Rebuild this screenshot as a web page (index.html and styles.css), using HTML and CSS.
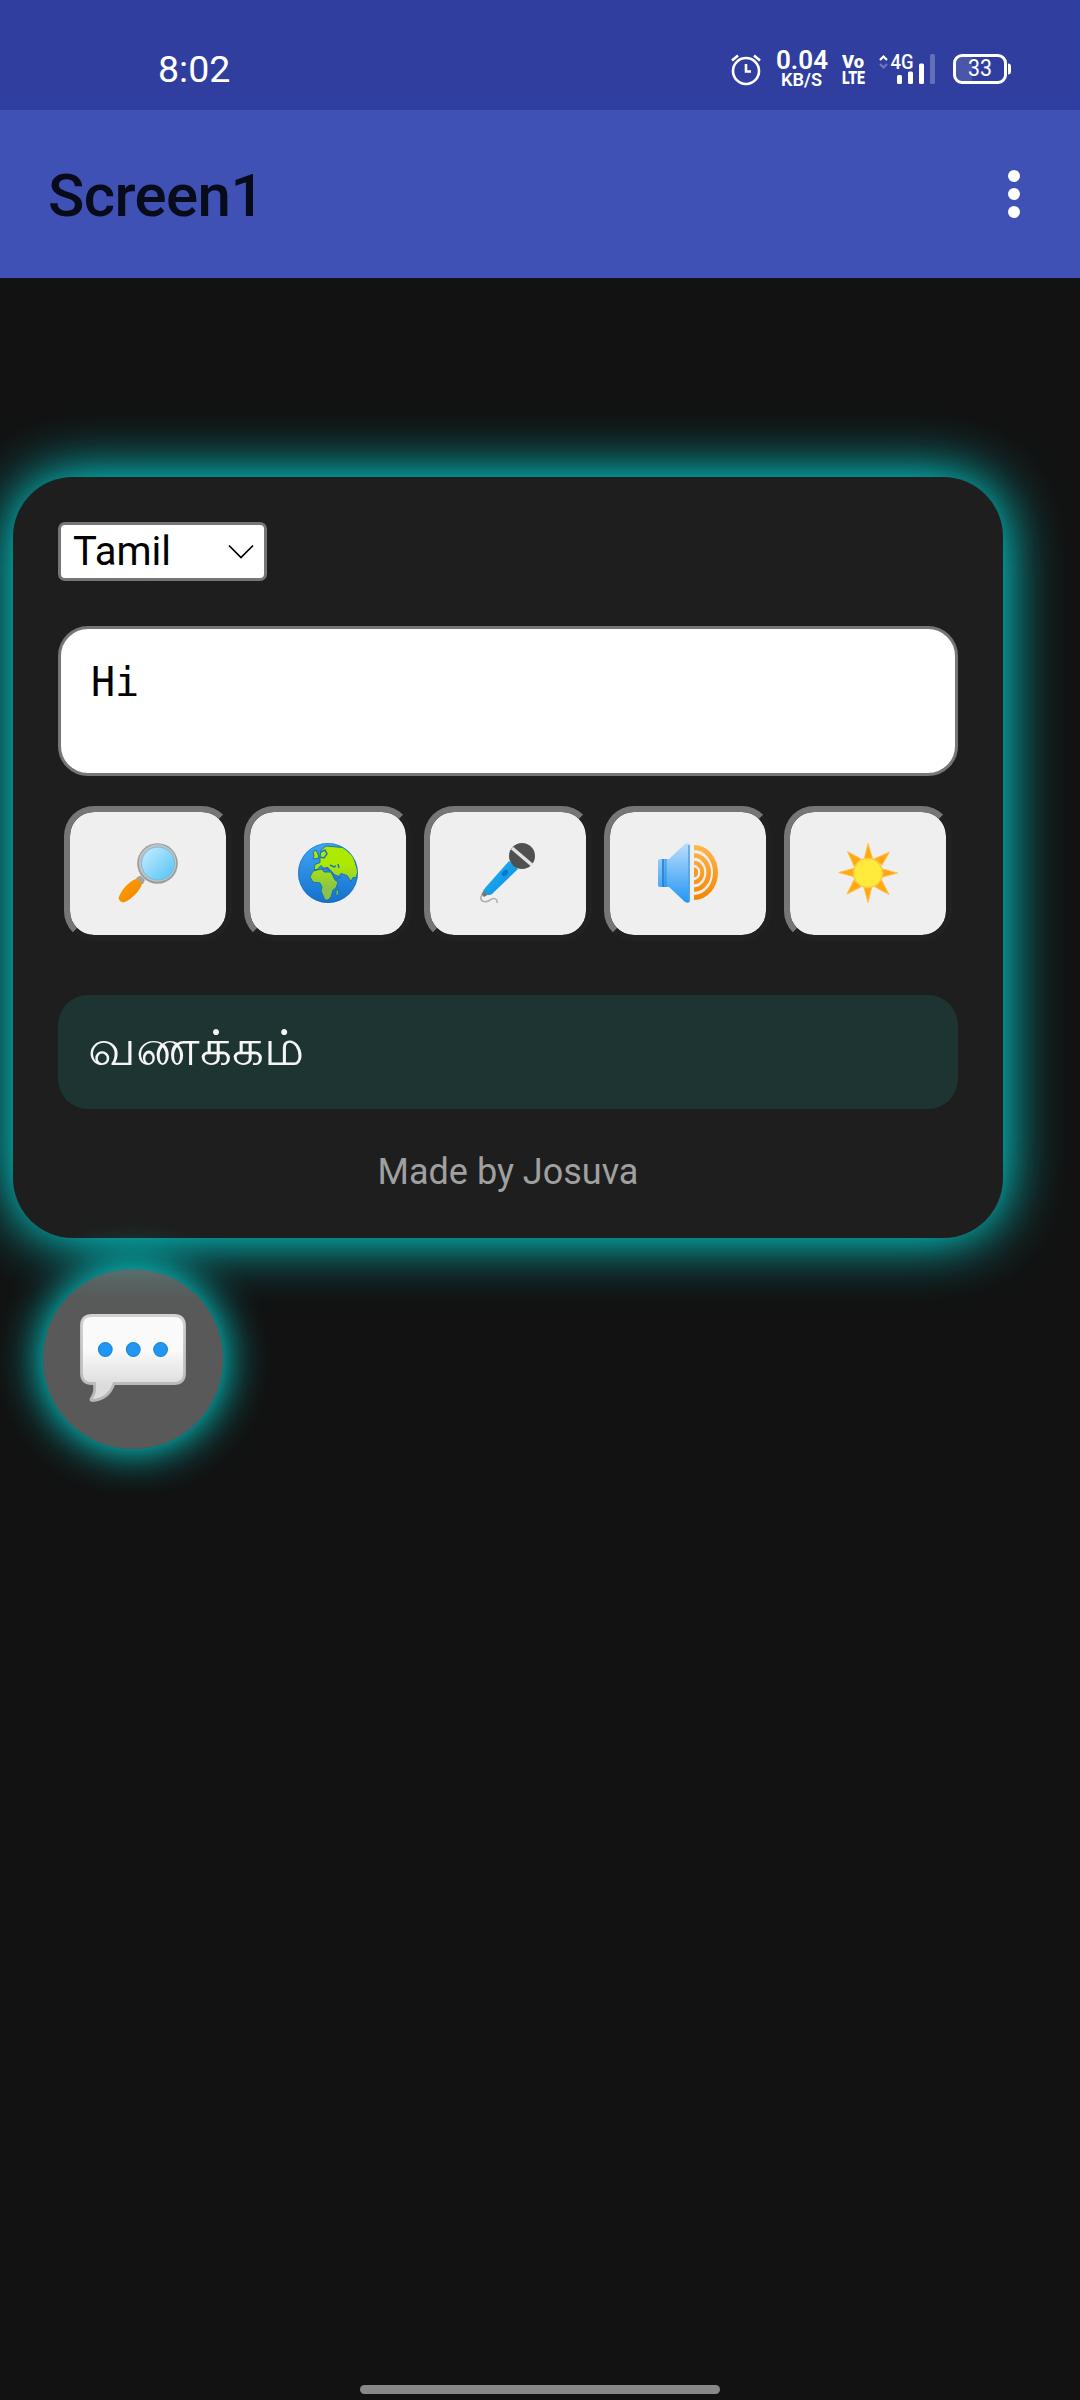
FILE: index.html
```html
<!DOCTYPE html>
<html lang="en">
<head>
<meta charset="utf-8">
<title>Screen1</title>
<link rel="stylesheet" href="styles.css">
</head>
<body>
<header class="status">
  <span class="clock">8:02</span>
  <svg class="status-icons" width="340" height="80" viewBox="0 0 340 80">
    <g fill="none" stroke="#fff" stroke-width="2.6">
      <circle cx="46" cy="41" r="13"/>
      <path d="M46 34v7.500h5M32 30.500l6-5M54 25.500l6 5"/>
      <path d="M180 30l3.500-3.500L187 30" stroke-width="2.200"/>
      <path d="M180 34l3.500 3.500L187 34" stroke-width="2.200" opacity=".3"/>
    </g>
    <g fill="#fff">
      <text x="76" y="38.500" font-size="25" font-weight="600" textLength="52" lengthAdjust="spacingAndGlyphs">0.04</text>
      <text x="81" y="55.500" font-size="18" font-weight="600" textLength="41" lengthAdjust="spacingAndGlyphs">KB/S</text>
      <text x="142" y="38" font-size="19" font-weight="900" textLength="22" lengthAdjust="spacingAndGlyphs">Vo</text>
      <text x="142" y="54" font-size="19" font-weight="900" textLength="23" lengthAdjust="spacingAndGlyphs">LTE</text>
      <text x="190.500" y="39" font-size="20" font-weight="500" textLength="23" lengthAdjust="spacingAndGlyphs">4G</text>
      <rect x="197" y="45" width="5" height="9" rx="1.500"/>
      <rect x="208" y="41.500" width="5" height="12.500" rx="1.500"/>
      <rect x="219" y="33.500" width="5" height="20.500" rx="1.500"/>
      <rect x="230" y="24" width="5" height="30" rx="1.500" opacity=".25"/>
      <path d="M262 27h10v24h-10a6 6 0 0 1-6-6V33a6 6 0 0 1 6-6z" opacity=".12"/>
      <text x="268" y="45.500" font-size="24" font-weight="400" textLength="24" lengthAdjust="spacingAndGlyphs">33</text>
      <path d="M308 33.500q3 0 3 3v5q0 3-3 3z"/>
    </g>
    <rect x="254.500" y="25.500" width="51" height="27" rx="7.500" fill="none" stroke="#fff" stroke-width="3"/>
  </svg>
</header>
<nav class="toolbar">
  <h1 class="title">Screen1</h1>
  <svg class="more" width="12" height="50" viewBox="0 0 12 50" fill="#fff"><circle cx="6" cy="7" r="6"/><circle cx="6" cy="25" r="6"/><circle cx="6" cy="43" r="6"/></svg>
</nav>
<main class="page">
  <section class="card">
    <div class="language"><span>Tamil</span>
      <svg width="26" height="15" viewBox="0 0 26 15" fill="none" stroke="#000" stroke-width="1.700"><path d="M1 1.500l12 12 12-12"/></svg>
    </div>
    <div class="input">Hi</div>
    <div class="actions">
      <button class="action" aria-label="Search">
        <svg width="60" height="60" viewBox="0 0 60 60">
          <defs>
            <linearGradient id="lens" x1="0" y1="0" x2="1" y2="1"><stop offset=".2" stop-color="#b3e5fc"/><stop offset="1" stop-color="#4fc3f7"/></linearGradient>
            <linearGradient id="handle" x1="0" y1="0" x2="1" y2="1"><stop offset="0" stop-color="#ffa000"/><stop offset="1" stop-color="#f08500"/></linearGradient>
          </defs>
          <path d="M18.500 35l4-2 4 4-2 4z" fill="#a4a4a4" stroke="#8b8b8b" stroke-width=".6"/>
          <path d="M19 35.500C11 38 3 47 .5 55q1 4 5 4.500C13 57 23 47 24 40.500z" fill="url(#handle)"/>
          <circle cx="39.500" cy="20.500" r="20.300" fill="#9c9c9c"/>
          <circle cx="39.500" cy="20" r="18.700" fill="#c3c3c3"/>
          <circle cx="40" cy="20.500" r="16.500" fill="url(#lens)" stroke="#71bde0" stroke-width="1"/>
        </svg>
      </button>
      <button class="action" aria-label="Translate">
        <svg width="60" height="60" viewBox="0 0 60 60">
          <defs>
            <linearGradient id="sea" x1="0" y1="0" x2="0" y2="1"><stop offset="0" stop-color="#42a5f5"/><stop offset="1" stop-color="#1371cd"/></linearGradient>
            <linearGradient id="land" gradientUnits="userSpaceOnUse" x1="0" y1="0" x2="0" y2="60"><stop offset=".35" stop-color="#aeea00"/><stop offset=".75" stop-color="#8bc34a"/></linearGradient>
            <clipPath id="globe"><circle cx="30" cy="30" r="29.500"/></clipPath>
          </defs>
          <circle cx="30" cy="30" r="30" fill="url(#sea)"/>
          <g fill="url(#land)" stroke="#1976a5" stroke-width="1" stroke-linejoin="round" clip-path="url(#globe)">
            <path d="M15 9l3-2 2 4 1 4-6 1 1-3z"/>
            <path d="M22 14l1-7 5-4 17 1.500 10 8 5 16-2 6-3 0-2 4-4-6-6-2-2 3-5-2-6-7-4 1-3-3-4 4h-3l1-5 5-2z"/>
            <path d="M15 28l9-2 2 3 7 0 4 8 3 2-2 6-3 2-2 7-3 3h-3l-4-9 1-4-2-4-7-1-3-5z"/>
            <path d="M38 48l3-2-1 6-2 1z"/>
          </g>
          <path d="M23 9l4-2 2 4-3 4-4-1M24 26l4-1 4 3M32 22l4 2 2-1M40 21l1 4M34 29l4 7 5-2" fill="none" stroke="#1976c8" stroke-width="1.500"/>
          <circle cx="30" cy="30" r="29.500" fill="none" stroke="#1669a8" stroke-opacity=".45"/>
        </svg>
      </button>
      <button class="action" aria-label="Speak">
        <svg width="60" height="60" viewBox="0 0 60 60">
          <defs><linearGradient id="mic" x1="0" y1="0" x2="1" y2="1"><stop offset="0" stop-color="#29b6f6"/><stop offset="1" stop-color="#0288e0"/></linearGradient></defs>
          <path d="M5 49l-2 5c-1 5 5 6 9 3s8-1 7 3" fill="none" stroke="#b0b0b0" stroke-width="1.600"/>
          <path d="M6 46l5 5-5 3-2-2z" fill="#757575"/>
          <path d="M31 18l9 8-26 25q-3 2-6 0-3-3-1-6z" fill="url(#mic)"/>
          <ellipse cx="27" cy="30" rx="2.500" ry="3.500" transform="rotate(45 27 30)" fill="#0277c8"/>
          <circle cx="44" cy="13" r="13" fill="#505050"/>
          <path d="M34 5l20 17" stroke="#e3e3e3" stroke-width="3.500"/>
        </svg>
      </button>
      <button class="action" aria-label="Listen">
        <svg width="60" height="60" viewBox="0 0 60 60">
          <defs>
            <linearGradient id="horn" x1="0" y1="0" x2="0" y2="1"><stop offset="0" stop-color="#bbdefb"/><stop offset="1" stop-color="#2196f3"/></linearGradient>
            <linearGradient id="waves" gradientUnits="userSpaceOnUse" x1="0" y1="2" x2="0" y2="57"><stop offset="0" stop-color="#ffb74d"/><stop offset="1" stop-color="#f58500"/></linearGradient>
          </defs>
          <path d="M2 16h9L27 1q4-2 5 1v56q-1 3-5 1L11 44H2q-2 0-2-2V18q0-2 2-2z" fill="url(#horn)"/>
          <path d="M31 2v56" stroke="#5b9fd4" stroke-width="1.500"/>
          <path d="M5 16v28" stroke="#1976d2" stroke-width="1.500"/><path d="M7.500 16v28" stroke="#1e88e5" stroke-width="2.500" opacity=".5"/>
          <g fill="none" stroke="url(#waves)" stroke-width="5">
            <path d="M36 4.500a21.500 25 0 0 1 0 50"/>
            <path d="M36 12.500a14.700 17 0 0 1 0 34" stroke-width="4.600"/>
            <path d="M36 19.800a8.300 9.700 0 0 1 0 19.400" stroke-width="4"/>
          </g>
          <path d="M36 24.500a4.200 5 0 0 1 0 10z" fill="#f99a24"/>
        </svg>
      </button>
      <button class="action" aria-label="Light theme">
        <svg width="60" height="60" viewBox="0 0 60 60">
          <g fill="#ffa810" stroke="#ffc24d" stroke-width="1" stroke-linejoin="round">
            <path d="M30 .5L35 17H26z"/><path d="M51.500 9L44 22l-8-6z"/>
            <path d="M59.500 30L43 34.500V25.500z"/><path d="M51 51.500L37 44l6-8z"/>
            <path d="M30 59.500L25.500 43H34z"/><path d="M9 51L16 37l7 7z"/>
            <path d="M.5 29.500L17 25v9z"/><path d="M9.500 8.500L23 16l-7 7z"/>
          </g>
          <circle cx="30" cy="30" r="14.500" fill="#ffeb3b" stroke="#fdc943" stroke-width="1.500"/>
        </svg>
      </button>
    </div>
    <div class="output" lang="ta">வணக்கம்</div>
    <footer class="credit">Made by Josuva</footer>
  </section>
  <div class="chat">
    <svg width="106" height="88" viewBox="0 0 106 88">
      <defs>
        <linearGradient id="bubble" gradientUnits="userSpaceOnUse" x1="0" y1="0" x2="0" y2="72"><stop offset=".5" stop-color="#fafafa"/><stop offset="1" stop-color="#dcdcdc"/></linearGradient>
        <linearGradient id="rim" gradientUnits="userSpaceOnUse" x1="0" y1="0" x2="0" y2="88"><stop offset="0" stop-color="#d2d2d2"/><stop offset="1" stop-color="#b5b5b5"/></linearGradient>
      </defs>
      <path d="M12 1.500h82q10.500 0 10.500 10.500v47q0 10.500-10.500 10.500H34C31 78 25 86 12 86.500q-2-.5-.5-2.500C15 79 15 76 14.500 69.500H12Q1.500 69.500 1.500 59V12Q1.500 1.500 12 1.500z" fill="url(#bubble)" stroke="url(#rim)" stroke-width="2.800"/>
      <g fill="#2196f3" stroke="#1b85d8" stroke-width="1.200"><circle cx="25.300" cy="35.500" r="6.800"/><circle cx="53.300" cy="35.500" r="6.800"/><circle cx="80.600" cy="35.500" r="6.800"/></g>
    </svg>
  </div>
</main>
<div class="home-bar"></div>
</body>
</html>
```
FILE: styles.css
```css
* { box-sizing: border-box; }
body {
  margin: 0;
  height: 2400px;
  display: flex;
  flex-direction: column;
  overflow: hidden;
  background: #121212;
  font-family: Roboto, "Noto Sans", sans-serif;
}
.status {
  height: 110px;
  display: flex;
  justify-content: space-between;
  align-items: flex-start;
  padding: 30px 40px 0 158px;
  background: #303f9f;
  color: #fff;
}
.clock { font-size: 37.500px; line-height: 78px; }
.status-icons { display: block; }
.toolbar {
  height: 168px;
  display: flex;
  justify-content: space-between;
  align-items: center;
  padding: 0 60px 0 48px;
  background: #3f51b5;
}
.title { margin: 4px 0 0; font-size: 60px; font-weight: 500; line-height: 70px; letter-spacing: -.6px; color: #080b19; }
.more { display: block; }
.page { flex: 1; padding: 199px 77px 0 13px; }
.card {
  height: 761px;
  display: flex;
  flex-direction: column;
  align-items: stretch;
  padding: 45px;
  border-radius: 60px;
  background: #1e1e1e;
  box-shadow: 0 0 60px #00ffff;
}
.language {
  width: 209px;
  height: 59px;
  display: flex;
  align-items: center;
  justify-content: space-between;
  padding: 0 10px 0 12px;
  border: 3px solid #767676;
  border-radius: 7px;
  background: #fff;
  color: #000;
  font-size: 40px;
  line-height: 50px;
}
.input {
  height: 150px;
  margin-top: 45px;
  padding: 30px;
  border: 3px solid #767676;
  border-radius: 30px;
  background: #fff;
  color: #000;
  font: 40px/47px "DejaVu Sans Mono", monospace;
}
.actions { display: flex; gap: 12px; margin-top: 30px; padding: 0 6px; }
.action {
  width: 168px;
  height: 135px;
  display: flex;
  align-items: center;
  justify-content: center;
  padding: 0 0 2px;
  border: 6px solid;
  border-color: #767676 #212121 #212121 #767676;
  border-radius: 30px;
  background: #efefef;
  background-clip: padding-box;
}
.output {
  height: 114px;
  margin-top: 54px;
  padding: 30px;
  border-radius: 30px;
  background: #1d3433;
  color: #f5f5f5;
  font-size: 50px;
  line-height: 47px;
}
.credit { margin-top: 42px; text-align: center; color: #a0a0a0; font-size: 36px; line-height: 42px; }
.chat {
  position: relative;
  width: 180px;
  height: 180px;
  display: flex;
  align-items: center;
  justify-content: center;
  margin: 31px 0 0 30px;
  padding-bottom: 2px;
  border-radius: 50%;
  background: rgba(255, 255, 255, .3);
  box-shadow: 0 0 45px #00ffff;
}
.home-bar { align-self: center; width: 360px; height: 9px; margin-bottom: 6px; border-radius: 5px; background: #888; }
```
